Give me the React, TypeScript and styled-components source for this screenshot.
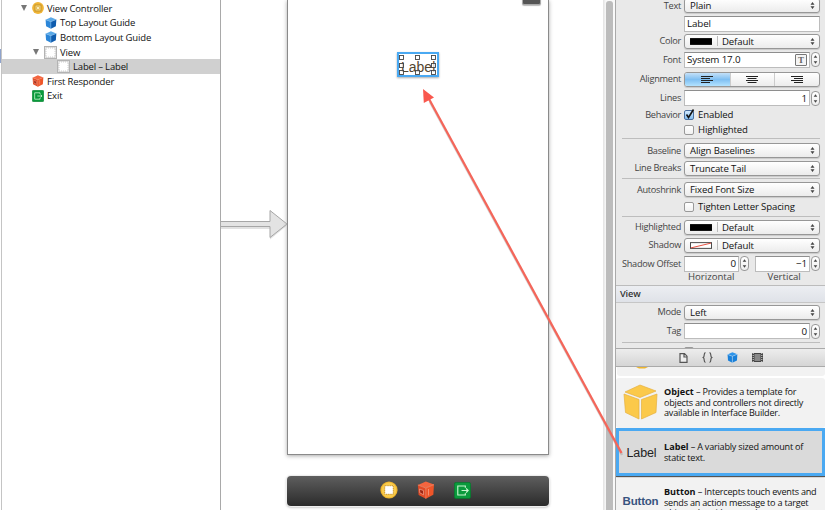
import React, { ReactNode } from 'react';
import styled, { createGlobalStyle } from 'styled-components';

const Global = createGlobalStyle`
  * { box-sizing: border-box; }
  html, body { margin: 0; padding: 0; overflow: hidden; background: #fff; }
  body { font-family: "Open Sans", "Noto Sans", sans-serif; font-size: 9.6px; font-weight: 500; letter-spacing: -0.13px; color: #111; }
`;

const Window = styled.div`
  position: relative; display: flex; width: 825px; height: 510px; overflow: hidden; background: #fff;
`;

/* ---------- outline ---------- */
const Gutter = styled.div`
  width: 2px; flex: none; padding-top: 49px; border-right: 1px solid #c4c4c4;
  &::before { content: ''; display: block; width: 1px; height: 14px; background: #8fa3cc; }
`;
const Outline = styled.aside`
  width: 219px; flex: none; border-right: 1px solid #a9a9a9; padding-top: 1px;
`;
const OutlineRow = styled.div<{ $indent: number; $selected?: boolean }>`
  display: flex; align-items: center; height: 14.6px; gap: 3px; padding-left: ${p => p.$indent}px;
  background: ${p => (p.$selected ? '#d0d0d0' : 'transparent')};
  font-size: 9.5px; letter-spacing: -0.17px; white-space: nowrap;
  svg { flex: none; }
`;
const Triangle = styled.span`
  width: 0; height: 0; margin-right: 2px; border: 4px solid transparent; border-bottom: 0; border-top: 6px solid #777;
  border-left-width: 3.5px; border-right-width: 3.5px;
`;

/* ---------- canvas ---------- */
const Canvas = styled.main`
  display: flex; width: 382px; flex: none; height: 510px;
`;
const EntrySide = styled.div`
  width: 66px; flex: none; padding-top: 206px;
  svg { display: block; }
`;
const Scene = styled.div`
  display: flex; flex-direction: column; gap: 21px; width: 262px; flex: none;
`;
const Phone = styled.div`
  position: relative; height: 455px; background: #fff; border: 1px solid #8a8a8a; border-top: 0; box-shadow: 0 1px 4px #aaa;
`;
const Battery = styled.div`
  position: absolute; left: 234px; top: -4px; width: 19px; height: 9px; background: #555; border: 1px solid #aaa; border-radius: 2px;
  box-shadow: 0 1px 1px #bbb;
`;
const PlacedLabel = styled.div`
  position: absolute; left: 109px; top: 52px; width: 42px; height: 25px; border: 2px solid #4aa9f2; background: #fff;
  box-shadow: 0 1px 2px #aaa;
  svg { display: block; }
`;
const Dock = styled.div`
  display: flex; justify-content: center; gap: 19px; align-items: center; height: 30px; border-radius: 4px; padding: 0 0 2px 14px;
  background: linear-gradient(#5e5e5e, #2b2b2b); box-shadow: 0 0 0 1px #eee, 0 1px 3px #999;
`;

const ScrollTrack = styled.div`
  width: 13px; flex: none; padding: 1px 3px 0 3px; background: linear-gradient(90deg, #e2e2e2, #f9f9f9 25%, #f9f9f9); border-right: 1px solid #a9a9a9;
`;
const ScrollThumb = styled.div`
  height: 520px; width: 7px; border-radius: 3px; background: #bcbcbc;
`;

/* ---------- inspector ---------- */
const Side = styled.aside`
  display: flex; flex-direction: column; width: 209px; flex: none; background: #e9e9e9;
`;
const Inspector = styled.section`
  height: 348px; flex: none; overflow: hidden;
`;
const Form = styled.div<{ $pull?: boolean }>`
  margin-top: ${p => (p.$pull ? -3 : 0)}px;
`;
const Row = styled.div<{ $h: number }>`
  display: grid; grid-template-columns: 65px 136px; column-gap: 3px; align-items: center; height: ${p => p.$h}px;
`;
const FieldName = styled.span`
  text-align: right; color: #444; white-space: nowrap; line-height: 12px; font-size: 9.2px; letter-spacing: -0.27px;
`;
const Rule = styled.div<{ $h: number }>`
  height: ${p => p.$h}px; padding: ${p => (p.$h > 2 ? 1 : 0)}px 5px 0 6px;
  &::before { content: ''; display: block; height: 1px; background: #bdbdbd; }
`;
const Popup = styled.div`
  display: flex; align-items: center; height: 15px; padding: 0 4px 0 5px; border: 1px solid #979797; border-radius: 3px;
  background: linear-gradient(#fff, #ececec); box-shadow: 0 1px 1px #c9c9c9; white-space: nowrap;
  svg { margin-left: auto; }
`;
const Swatch = styled.span`
  display: flex; width: 28px; height: 10px; align-items: center; border-right: 1px solid #bbb; margin-right: 4px; padding-right: 5px;
  svg { margin: 0; }
`;
const Inline = styled.div<{ $gap: number }>`
  display: flex; align-items: center; gap: ${p => p.$gap}px;
`;
const Input = styled.div<{ $w: number; $right?: boolean }>`
  display: flex; align-items: center; justify-content: ${p => (p.$right ? 'flex-end' : 'space-between')};
  width: ${p => p.$w}px; height: 16px; padding: 0 2px 0 2px; background: #fff; border: 1px solid #bcbcbc; border-top-color: #8e8e8e;
  font-size: 9.8px; white-space: nowrap;
`;
const FontButton = styled.span`
  display: grid; place-items: center; width: 12px; height: 12px; border: 1px solid #777; border-radius: 1px;
  font: bold 9px "Liberation Serif", serif; color: #666; background: #f5f5f5;
`;
const StepperBox = styled.span`
  display: grid; place-items: center; width: 9px; height: 15px; border: 1px solid #999; border-radius: 4px; background: linear-gradient(#fff, #eee);
`;
const Segments = styled.div`
  display: grid; grid-template-columns: repeat(3, 1fr); height: 15px; border: 1px solid #979797; border-radius: 3px; overflow: hidden;
  background: linear-gradient(#fff, #ececec); box-shadow: 0 1px 1px #c9c9c9;
`;
const Segment = styled.span<{ $on?: boolean }>`
  display: grid; place-items: center; background: ${p => (p.$on ? 'linear-gradient(#c3e0f8, #7fbff2 50%, #b3e3ff)' : 'none')};
  & + & { border-left: 1px solid #ccc; }
`;
const CheckLine = styled.label`
  display: flex; align-items: center; gap: 4px; white-space: nowrap; line-height: 12px;
`;
const Box = styled.span<{ $on?: boolean }>`
  width: 10px; height: 10px; border: 1px solid ${p => (p.$on ? '#4a6f9f' : '#999')}; border-radius: 2px;
  background: ${p => (p.$on ? 'linear-gradient(#d5ebff, #83bdf0)' : 'linear-gradient(#fff, #f1f1f1)')};
  svg { display: block; overflow: visible; }
`;
const Captions = styled.div`
  display: flex; height: 12px; padding-left: 72px; gap: 33px; line-height: 8px; color: #444; letter-spacing: 0;
`;
const SectionHeader = styled.h2`
  margin: 0; height: 18px; padding-left: 4px; border-top: 1px solid #bcbcbc; border-bottom: 1px solid #c6c6c6;
  background: linear-gradient(#eceef2, #dfe2e8); font-size: 9.2px; font-weight: 600; line-height: 16px; color: #333;
`;
const Peek = styled.div`
  width: 10px; height: 5px; margin: 3px 0 0 68px; border: 1px solid #999; border-radius: 2px;
`;

/* ---------- library ---------- */
const LibraryTabs = styled.nav`
  display: flex; align-items: center; justify-content: center; gap: 14px; height: 19px; flex: none;
  border-top: 1px solid #aaa; border-bottom: 1px solid #aaa; background: linear-gradient(#ededed, #d5d5d5);
`;
const Library = styled.section`
  flex: 1; overflow: hidden; background: #fff;
`;
const CardTail = styled.div`
  height: 9px; margin: 0 0 2px 1px; padding-left: 17px; background: #f2f2f2; border-radius: 0 0 3px 3px;
  svg { display: block; }
`;
const Card = styled.article<{ $h: number; $selected?: boolean }>`
  display: grid; grid-template-columns: 47px 1fr; height: ${p => p.$h}px; padding-left: 1px; overflow: hidden; border-radius: 3px; background: #f2f2f2;
  ${p => p.$selected && 'background: #dadada; border: 3px solid #4aa9f2; border-radius: 0; padding-left: 0; grid-template-columns: 45px 1fr; box-shadow: 0 1px 1px #555; margin-bottom: 1px; position: relative;'}
`;
const Thumb = styled.div<{ $top: number }>`
  padding-top: ${p => p.$top}px; text-align: center; white-space: nowrap;
  font: 12.5px "Liberation Sans", sans-serif; letter-spacing: -0.1px; color: #222;
  svg { display: block; margin-left: 6px; }
`;
const ButtonSample = styled.span`
  display: block; font-weight: bold; font-size: 11.5px; letter-spacing: -0.2px; color: #38547f;
`;
const Blurb = styled.p<{ $top: number }>`
  margin: 0; padding-top: ${p => p.$top}px; font-size: 9.1px; line-height: 10.6px; white-space: nowrap; color: #111; letter-spacing: -0.22px;
  b { font-weight: 700; letter-spacing: 0; }
`;
const DragArrow = styled.svg`
  position: absolute; left: 0; top: 0; pointer-events: none;
`;

/* ---------- icons ---------- */
const ControllerIcon = ({ s }: { s: number }) => (
  <svg width={s} height={s} viewBox="0 0 18 18">
    <circle cx="9" cy="9" r="8.6" fill="#efb52c" />
    <circle cx="9" cy="9" r="7.4" fill="#f9cb4c" />
    <rect x="4.7" y="4.7" width="8.6" height="8.6" fill="#fff" stroke="#c99325" strokeDasharray="1.2 .6" />
  </svg>
);
const SmallControllerIcon = () => (
  <svg width="12" height="12" viewBox="0 0 12 12">
    <circle cx="6" cy="6" r="5.9" fill="#f0b536" />
    <rect x="3" y="3" width="6" height="6" fill="#f9d878" stroke="#b88a26" strokeWidth=".8" />
    <rect x="4.8" y="4.8" width="2.4" height="2.4" fill="#fff3c4" stroke="#c99a35" strokeWidth=".5" />
  </svg>
);
type CubeProps = { s: number; top: string; left: string; right: string; edge: string; cut?: boolean };
const Cube = ({ s, top, left, right, edge, cut }: CubeProps) => (
  <svg width={s} height={s} viewBox="0 0 18 18">
    <path d="M8.8.4 17 3.6 8.800 7 .9 4z" fill={top} />
    <path d="M.9 4 8.800 7v10.700L1.600 14z" fill={left} />
    <path d="M17 3.600 8.800 7v10.700l7.500-3.900z" fill={right} />
    <path d="M.9 4 8.800 7 17 3.600M8.800 7v10.700" fill="none" stroke={edge} strokeWidth=".7" />
    {cut && <path d="m2.500 8 4 1.600v4.200l-3.700-2z" fill="#9c2412" stroke="#f9a58c" strokeWidth=".7" />}
    {cut && <path d="M11.500 8v6.500" stroke="#f9a58c" strokeWidth=".7" />}
  </svg>
);
const BlueCube = () => <Cube s={12} top="#5aa9e8" left="#2b86d8" right="#0f5cae" edge="#8cc4ef" />;
const RedCube = ({ s }: { s: number }) => <Cube s={s} top="#f4653f" left="#e04a26" right="#ee5529" edge="#f58e6f" cut />;
const ExitIcon = ({ s }: { s: number }) => (
  <svg width={s} height={s} viewBox="0 0 18 18">
    <rect x=".4" y=".4" width="17.2" height="17.2" rx="2" fill="#0a9a3c" stroke="#057a2c" strokeWidth=".8" />
    <path d="M12 6V4.200H4v9.600h8V12M8 9h7M12.800 6.800 15 9l-2.200 2.200" fill="none" stroke="#c9f5cf" strokeWidth="1.200" />
  </svg>
);
const ViewIcon = () => (
  <svg width="13" height="13" viewBox="0 0 13 13">
    <rect x=".5" y=".5" width="12" height="12" fill="#e4e4e4" stroke="#b3b3b3" />
    <rect x="2" y="2" width="9" height="9" fill="#fff" stroke="#bbb" strokeWidth=".7" strokeDasharray="1 1" />
  </svg>
);
const Chevrons = () => (
  <svg width="5" height="7" viewBox="0 0 5 7"><path d="M.5 2.700 2.500 0l2 2.700zM.5 4.300 2.500 7l2-2.700z" fill="#444" /></svg>
);
const Stepper = () => (
  <StepperBox><svg width="5" height="9" viewBox="0 0 5 9"><path d="M.7 2.800 2.500.3l1.800 2.500zM.7 6.200l1.800 2.500 1.800-2.500z" fill="#444" /></svg></StepperBox>
);
const AlignIcon = ({ inset }: { inset: number }) => (
  <svg width="12" height="7" viewBox="0 0 12 7">
    <path d={`M0 .5h12M${inset} 2.5h9M0 4.5h12M${inset} 6.5h9`} stroke="#222" />
  </svg>
);
const ColorChip = ({ none }: { none?: boolean }) => (
  <Swatch>
    <svg width="23" height="7" viewBox="0 0 23 7">
      <rect x=".5" y=".5" width="22" height="6" fill={none ? '#fff' : '#000'} stroke={none ? '#444' : '#000'} />
      {none && <path d="M1 6 22 1" stroke="#e4493a" />}
    </svg>
  </Swatch>
);

const Select = ({ children }: { children: ReactNode }) => <Popup>{children}<Chevrons /></Popup>;
const Field = ({ name, h, children }: { name?: string; h: number; children: ReactNode }) => (
  <Row $h={h}><FieldName>{name}</FieldName>{children}</Row>
);
const Check = ({ on, children }: { on?: boolean; children: ReactNode }) => (
  <CheckLine>
    <Box $on={on}>{on && <svg width="8" height="8"><path d="m1.500 3.500 2 3L8.500-1.500" fill="none" stroke="#111" strokeWidth="1.600" /></svg>}</Box>
    {children}
  </CheckLine>
);

const handles = [[1, 2], [17, 2], [33, 2], [1, 10], [33, 10], [1, 17], [17, 17], [33, 17]];

export default function App() {
  return (
    <Window>
      <Global />
      <Gutter />
      <Outline>
        <OutlineRow $indent={19}><Triangle /><SmallControllerIcon />View Controller</OutlineRow>
        <OutlineRow $indent={43}><BlueCube />Top Layout Guide</OutlineRow>
        <OutlineRow $indent={43}><BlueCube />Bottom Layout Guide</OutlineRow>
        <OutlineRow $indent={31}><Triangle /><ViewIcon />View</OutlineRow>
        <OutlineRow $indent={55} $selected><ViewIcon />Label – Label</OutlineRow>
        <OutlineRow $indent={30}><RedCube s={12} />First Responder</OutlineRow>
        <OutlineRow $indent={30}><ExitIcon s={12} />Exit</OutlineRow>
      </Outline>

      <Canvas>
        <EntrySide>
          <svg width="67" height="36" viewBox="0 0 67 36">
            <path d="M0 15.500h49V4l17 14-17 14V21.500H0z" fill="#aaa" opacity=".35" transform="translate(0 1.500)" />
            <path d="M0 15.500h49V4.500L66 18 49 31.500V20.500H0" fill="#e3e3e3" stroke="#a6a6a6" />
          </svg>
        </EntrySide>
        <Scene>
          <Phone>
            <Battery />
            <PlacedLabel>
              <svg width="38" height="21" viewBox="0 0 38 21">
                <text x="2" y="17.500" fontFamily="Liberation Sans" fontSize="14" letterSpacing="0" fill="#54452f">Label</text>
                {handles.map(([x, y]) => <rect key={`${x}-${y}`} x={x - 0.5} y={y - 0.5} width="4" height="4" fill="#fff" fillOpacity=".7" stroke="#444" strokeWidth=".9" />)}
              </svg>
            </PlacedLabel>
          </Phone>
          <Dock><ControllerIcon s={18} /><RedCube s={18} /><ExitIcon s={17} /></Dock>
        </Scene>
      </Canvas>

      <ScrollTrack><ScrollThumb /></ScrollTrack>

      <Side>
        <Inspector>
          <Form $pull>
            <Field name="Text" h={17}><Select>Plain</Select></Field>
            <Field h={19}><Input $w={136}>Label</Input></Field>
            <Field name="Color" h={16}><Select><ColorChip />Default</Select></Field>
            <Field name="Font" h={21}><Inline $gap={1}><Input $w={126}>System 17.0<FontButton>T</FontButton></Input><Stepper /></Inline></Field>
            <Field name="Alignment" h={18}>
              <Segments>
                <Segment $on><AlignIcon inset={0} /></Segment>
                <Segment><AlignIcon inset={1.5} /></Segment>
                <Segment><AlignIcon inset={3} /></Segment>
              </Segments>
            </Field>
            <Field name="Lines" h={20}><Inline $gap={1}><Input $w={126} $right>1</Input><Stepper /></Inline></Field>
            <Field name="Behavior" h={14}><Check on>Enabled</Check></Field>
            <Field h={15}><Check>Highlighted</Check></Field>
            <Rule $h={5} />
            <Field name="Baseline" h={17}><Select>Align Baselines</Select></Field>
            <Field name="Line Breaks" h={18}><Select>Truncate Tail</Select></Field>
            <Rule $h={4} />
            <Field name="Autoshrink" h={17}><Select>Fixed Font Size</Select></Field>
            <Field h={18}><Check>Tighten Letter Spacing</Check></Field>
            <Rule $h={2} />
            <Field name="Highlighted" h={18}><Select><ColorChip />Default</Select></Field>
            <Field name="Shadow" h={18}><Select><ColorChip none />Default</Select></Field>
            <Field name="Shadow Offset" h={19}>
              <Inline $gap={6}>
                <Inline $gap={1}><Input $w={55} $right>0</Input><Stepper /></Inline>
                <Inline $gap={1}><Input $w={55} $right>−1</Input><Stepper /></Inline>
              </Inline>
            </Field>
            <Captions><span>Horizontal</span><span>Vertical</span></Captions>
          </Form>
          <SectionHeader>View</SectionHeader>
          <Form>
            <Field name="Mode" h={18}><Select>Left</Select></Field>
            <Field name="Tag" h={20}><Inline $gap={1}><Input $w={126} $right>0</Input><Stepper /></Inline></Field>
            <Rule $h={3} />
            <Peek />
          </Form>
        </Inspector>
        <LibraryTabs>
          <svg width="9" height="10" viewBox="0 0 9 10"><path d="M1 .7h4.500L8 3.200V9.300H1zM5 1v3h3" fill="#eee" stroke="#555" strokeWidth="1.200" /></svg>
          <svg width="11" height="11" viewBox="0 0 11 11"><path d="M3.500.7C1.200.7 3.200 4.500 1.200 5.500c2 1 0 4.800 2.300 4.800M7.500.7c2.300 0 .3 3.800 2.300 4.800-2 1 0 4.800-2.300 4.800" fill="none" stroke="#555" strokeWidth="1.200" /></svg>
          <Cube s={11} top="#2d94ea" left="#1980da" right="#1980da" edge="#d9ecfb" />
          <svg width="11" height="9" viewBox="0 0 11 9"><rect width="11" height="9" fill="#444" /><rect x="2.500" y="1" width="6" height="7" fill="#888" /><path d="M1.200 0v9M9.800 0v9" stroke="#ddd" strokeWidth="1" strokeDasharray="1 1" /></svg>
        </LibraryTabs>
        <Library>
          <CardTail><svg width="16" height="2"><path d="M2 0h12L11 1.500H5z" fill="#edb52e" /></svg></CardTail>
          <Card $h={50}>
            <Thumb $top={6}>
              <svg width="35" height="36" viewBox="0 0 35 36">
                <path d="M17 1 33 7 17 13.500 2 8zM1 10l15 5.500V35L2.500 28.500zM34 10 18.500 15.500V35L33 28.500z" fill="#fbc94a" stroke="#e5b040" strokeWidth=".7" />
              </svg>
            </Thumb>
            <Blurb $top={9}><b>Object</b> – Provides a template for<br />objects and controllers not directly<br />available in Interface Builder.</Blurb>
          </Card>
          <Card $h={48} $selected>
            <Thumb $top={15}>Label</Thumb>
            <Blurb $top={11}><b>Label</b> – A variably sized amount of<br />static text.</Blurb>
          </Card>
          <Card $h={50}>
            <Thumb $top={18}><ButtonSample>Button</ButtonSample></Thumb>
            <Blurb $top={10}><b>Button</b> – Intercepts touch events and<br />sends an action message to a target<br />object when it's tapped.</Blurb>
          </Card>
        </Library>
      </Side>

      <DragArrow width="825" height="510" viewBox="0 0 825 510">
        <path d="M622 454 430 101" stroke="#999" strokeWidth="2.500" opacity=".4" transform="translate(0 1)" />
        <path d="M621.500 453 429 99" stroke="#f4665a" strokeWidth="2.300" />
        <path d="M423 89l.8 14 10.200-5.600z" fill="#f9584e" />
      </DragArrow>
    </Window>
  );
}
